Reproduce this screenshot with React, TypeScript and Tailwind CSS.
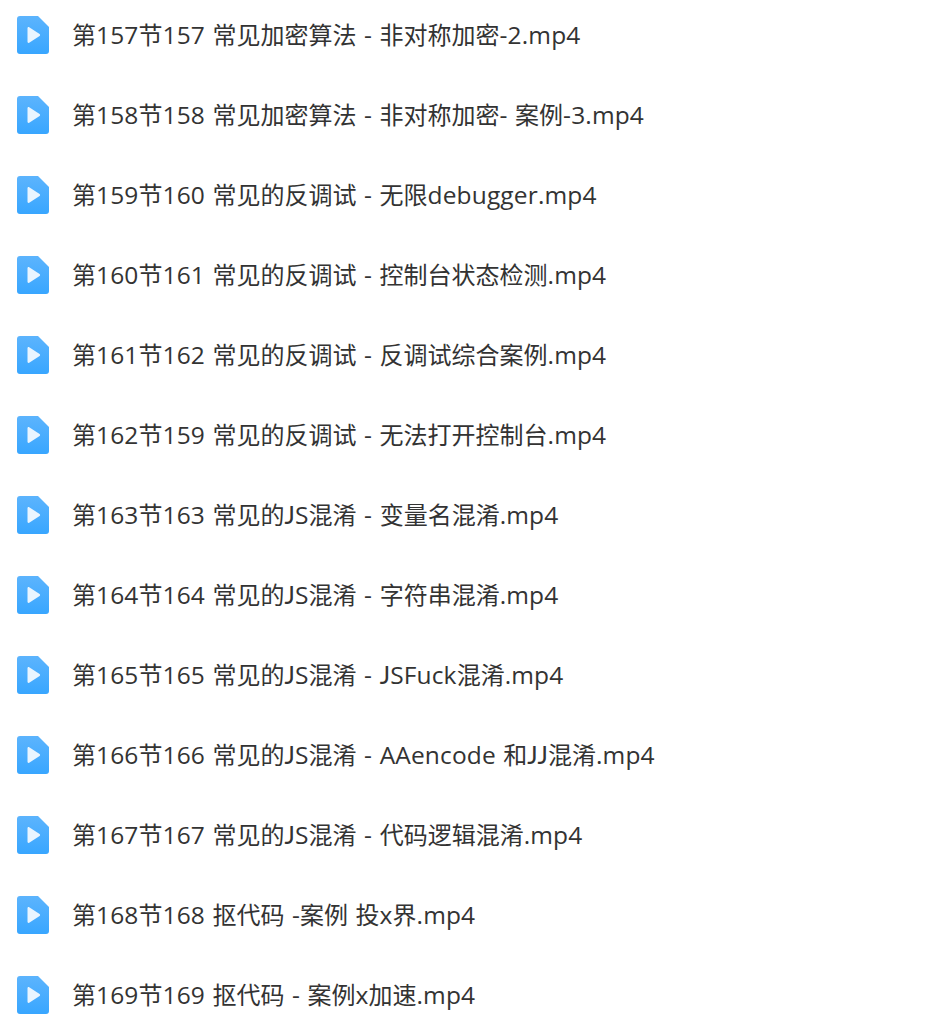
const files = [
  '第157节157 常见加密算法 - 非对称加密-2.mp4',
  '第158节158 常见加密算法 - 非对称加密- 案例-3.mp4',
  '第159节160 常见的反调试 - 无限debugger.mp4',
  '第160节161 常见的反调试 - 控制台状态检测.mp4',
  '第161节162 常见的反调试 - 反调试综合案例.mp4',
  '第162节159 常见的反调试 - 无法打开控制台.mp4',
  '第163节163 常见的JS混淆 - 变量名混淆.mp4',
  '第164节164 常见的JS混淆 - 字符串混淆.mp4',
  '第165节165 常见的JS混淆 - JSFuck混淆.mp4',
  '第166节166 常见的JS混淆 - AAencode 和JJ混淆.mp4',
  '第167节167 常见的JS混淆 - 代码逻辑混淆.mp4',
  '第168节168 抠代码 -案例 投x界.mp4',
  '第169节169 抠代码 - 案例x加速.mp4',
]

function VideoIcon() {
  return (
    <svg width="32" height="38" viewBox="0 0 32 38" className="shrink-0">
      <defs>
        <linearGradient id="fileBlue" x1="0" y1="0" x2="0" y2="1">
          <stop offset="0" stopColor="#5cb4fd" />
          <stop offset="1" stopColor="#38a6ff" />
        </linearGradient>
      </defs>
      <path d="M3 0H21L32 11V35a3 3 0 0 1-3 3H3a3 3 0 0 1-3-3V3a3 3 0 0 1 3-3Z" fill="url(#fileBlue)" />
      <path d="M10.5 12.2c0-.9.9-1.4 1.7-1L22.6 18c.7.4.7 1.5 0 1.9l-10.4 6.9c-.8.5-1.7-.1-1.7-1Z" fill="#eaf5ff" />
    </svg>
  )
}

// latin runs are a touch bigger than the CJK ones, J comes from Lato so it stays on the baseline
function FileName({ name }: { name: string }) {
  const parts = name.split(/([\x00-\x7f]+)/).filter(Boolean)
  return (
    <span className="whitespace-pre leading-[32px]">
      {parts.map((part, i) =>
        /^[\x00-\x7f]/.test(part) ? (
          <span key={i} className="text-[24.5px] tracking-[0.15px] [word-spacing:1px]">
            {part.split(/(J)/).filter(Boolean).map((bit, j) =>
              bit === 'J' ? <span key={j} className="font-['Lato']">J</span> : bit
            )}
          </span>
        ) : (
          <span key={i}>{part}</span>
        )
      )}
    </span>
  )
}

export default function App() {
  return (
    <div className="h-[1031px] overflow-hidden bg-white font-['Open_Sans','Noto_Sans_CJK_SC',sans-serif] text-[24px] text-[#333333]">
      <ul className="flex flex-col">
        {files.map((name) => (
          <li key={name} className="flex h-[80px] items-center gap-[23px] pl-[17px] first:mt-[-5px]">
            <VideoIcon />
            <FileName name={name} />
          </li>
        ))}
      </ul>
    </div>
  )
}
